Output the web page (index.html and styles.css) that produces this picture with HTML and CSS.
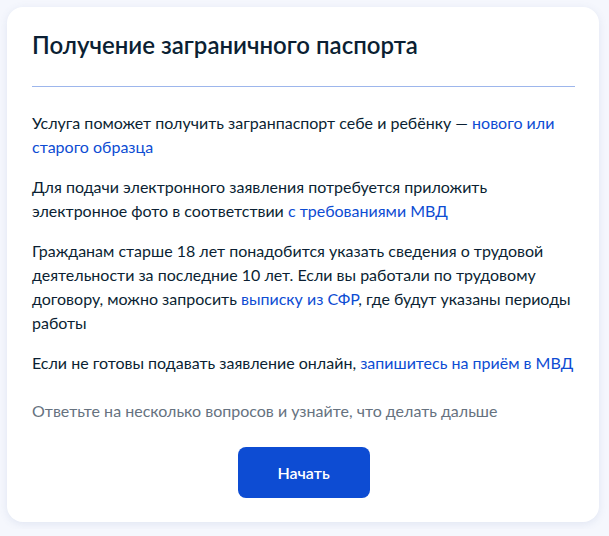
FILE: index.html
```html
<!DOCTYPE html>
<html lang="ru">
<head>
    <meta charset="UTF-8">
    <meta name="viewport" content="width=device-width, initial-scale=1.0">
    <title>Получение заграничного паспорта</title>
    <link rel="stylesheet" href="styles.css">
</head>
<body>
    <!-- Карточка услуги -->
    <div class="card">
        <h1 class="card-title">Получение заграничного паспорта</h1>
        <div class="divider"></div>

        <p class="text">Услуга поможет получить загранпаспорт себе и ребёнку — <a href="#">нового или старого образца</a></p>
        <p class="text">Для подачи электронного заявления потребуется приложить электронное фото в соответствии <a href="#">с требованиями МВД</a></p>
        <p class="text">Гражданам старше 18 лет понадобится указать сведения о трудовой деятельности за последние 10 лет. Если вы работали по трудовому договору, можно запросить <a href="#">выписку из СФР</a>, где будут указаны периоды работы</p>
        <p class="text">Если не готовы подавать заявление онлайн, <a href="#">запишитесь на приём в МВД</a></p>

        <p class="text hint">Ответьте на несколько вопросов и узнайте, что делать дальше</p>

        <div class="actions">
            <button class="start-button">Начать</button>
        </div>
    </div>
</body>
</html>
```

FILE: styles.css
```css
/* Grunddesign */
body {
    font-family: Lato, "Open Sans", sans-serif;
    background-color: #f5f7fd;
    color: #0b1f33;
    margin: 0;
    padding: 7px 10px 7px 7px;
}

/* Karte */
.card {
    background-color: #ffffff;
    border-radius: 16px;
    box-shadow: 0 2px 8px rgba(86, 111, 165, 0.12);
    padding: 22px 24px 24px 25px;
}

.card-title {
    margin: 0;
    font-size: 24px;
    font-weight: 600;
    line-height: 32px;
}

.divider {
    height: 1px;
    background-color: #9db6ec;
    margin: 25px 0 24px;
}

.text {
    font-size: 16px;
    line-height: 24px;
    margin: 0 0 16px;
}

.text a {
    color: #0d4cd3;
    text-decoration: none;
}

.hint {
    color: #66727f;
    margin-top: 24px;
    margin-bottom: 24px;
}

.actions {
    display: flex;
    justify-content: center;
}

.start-button {
    width: 132px;
    height: 51px;
    background-color: #0d4cd3;
    color: #ffffff;
    border: none;
    border-radius: 8px;
    font-family: Lato, sans-serif;
    font-size: 16px;
    font-weight: 600;
    cursor: pointer;
}
```
